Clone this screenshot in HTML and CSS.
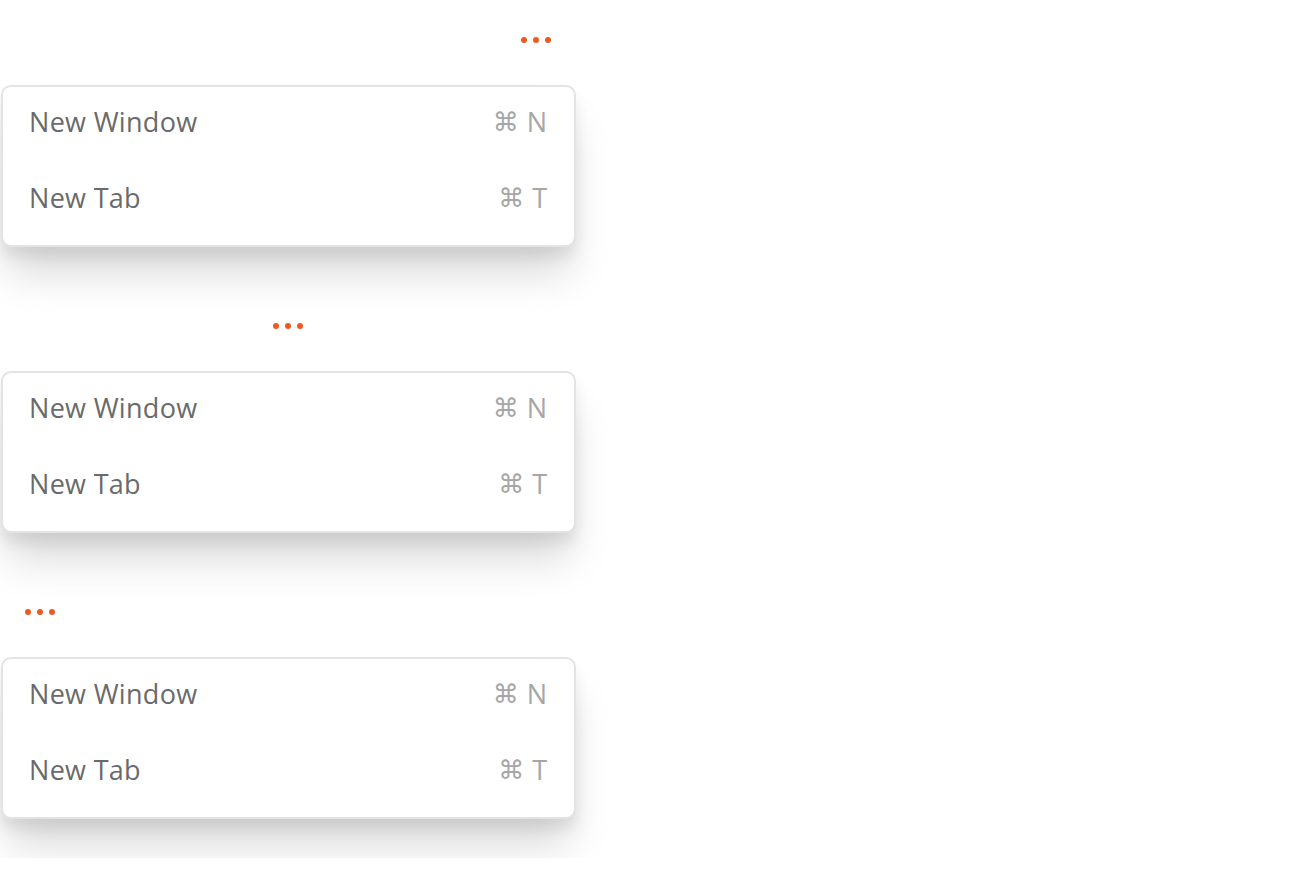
FILE: index.html
```html
<!DOCTYPE html>
<html>
<head>
<meta charset="utf-8">
<link rel="stylesheet" href="styles.css">
</head>
<body>
<div class="stack">
  <section class="demo">
    <div class="trigger-row end">
      <button class="trigger" aria-label="More"><span></span><span></span><span></span></button>
    </div>
    <div class="menu">
      <div class="item"><span class="label">New Window</span><span class="kbd"><span class="cmd">⌘</span> N</span></div>
      <div class="item"><span class="label">New Tab</span><span class="kbd"><span class="cmd">⌘</span> T</span></div>
    </div>
  </section>
  <section class="demo">
    <div class="trigger-row center">
      <button class="trigger" aria-label="More"><span></span><span></span><span></span></button>
    </div>
    <div class="menu">
      <div class="item"><span class="label">New Window</span><span class="kbd"><span class="cmd">⌘</span> N</span></div>
      <div class="item"><span class="label">New Tab</span><span class="kbd"><span class="cmd">⌘</span> T</span></div>
    </div>
  </section>
  <section class="demo">
    <div class="trigger-row start">
      <button class="trigger" aria-label="More"><span></span><span></span><span></span></button>
    </div>
    <div class="menu">
      <div class="item"><span class="label">New Window</span><span class="kbd"><span class="cmd">⌘</span> N</span></div>
      <div class="item"><span class="label">New Tab</span><span class="kbd"><span class="cmd">⌘</span> T</span></div>
    </div>
  </section>
</div>
</body>
</html>
```
FILE: styles.css
```css
html, body {
  margin: 0;
  padding: 0;
  background: #ffffff;
}
body {
  font-family: "Open Sans", "Noto Sans", sans-serif;
}
.stack {
  width: 575px;
  margin-left: 1px;
  display: flex;
  flex-direction: column;
}
.demo {
  height: 286px;
  display: flex;
  flex-direction: column;
}
.trigger-row {
  height: 80px;
  display: flex;
  align-items: center;
  padding: 0 25px 0 24px;
  margin-bottom: 5px;
}
.trigger-row.end { justify-content: flex-end; }
.trigger-row.center { justify-content: center; }
.trigger-row.start { justify-content: flex-start; }
.trigger {
  display: flex;
  gap: 6px;
  padding: 0;
  border: 0;
  background: none;
}
.trigger span {
  width: 6px;
  height: 6px;
  border-radius: 50%;
  background: #ea5a22;
}
.menu {
  border: 2px solid #e3e3e3;
  border-radius: 10px;
  padding: 3px 0;
  background: #fff;
  box-shadow: 0 32px 42px -6px rgba(0, 0, 0, 0.15), 0 10px 14px rgba(0, 0, 0, 0.08);
}
.item {
  height: 76px;
  display: flex;
  align-items: center;
  justify-content: space-between;
  padding: 0 27px 0 26px;
  font-size: 27px;
  font-weight: 500;
}
.label {
  color: #6a6a6a;
  margin-top: -13px;
  letter-spacing: 0.3px;
}
.kbd {
  color: #a6a6a6;
  margin-top: -13px;
  display: flex;
  align-items: center;
  gap: 8px;
}
.cmd {
  font-family: "DejaVu Sans", sans-serif;
  font-size: 26px;
  font-weight: 400;
  line-height: 1;
}
```
